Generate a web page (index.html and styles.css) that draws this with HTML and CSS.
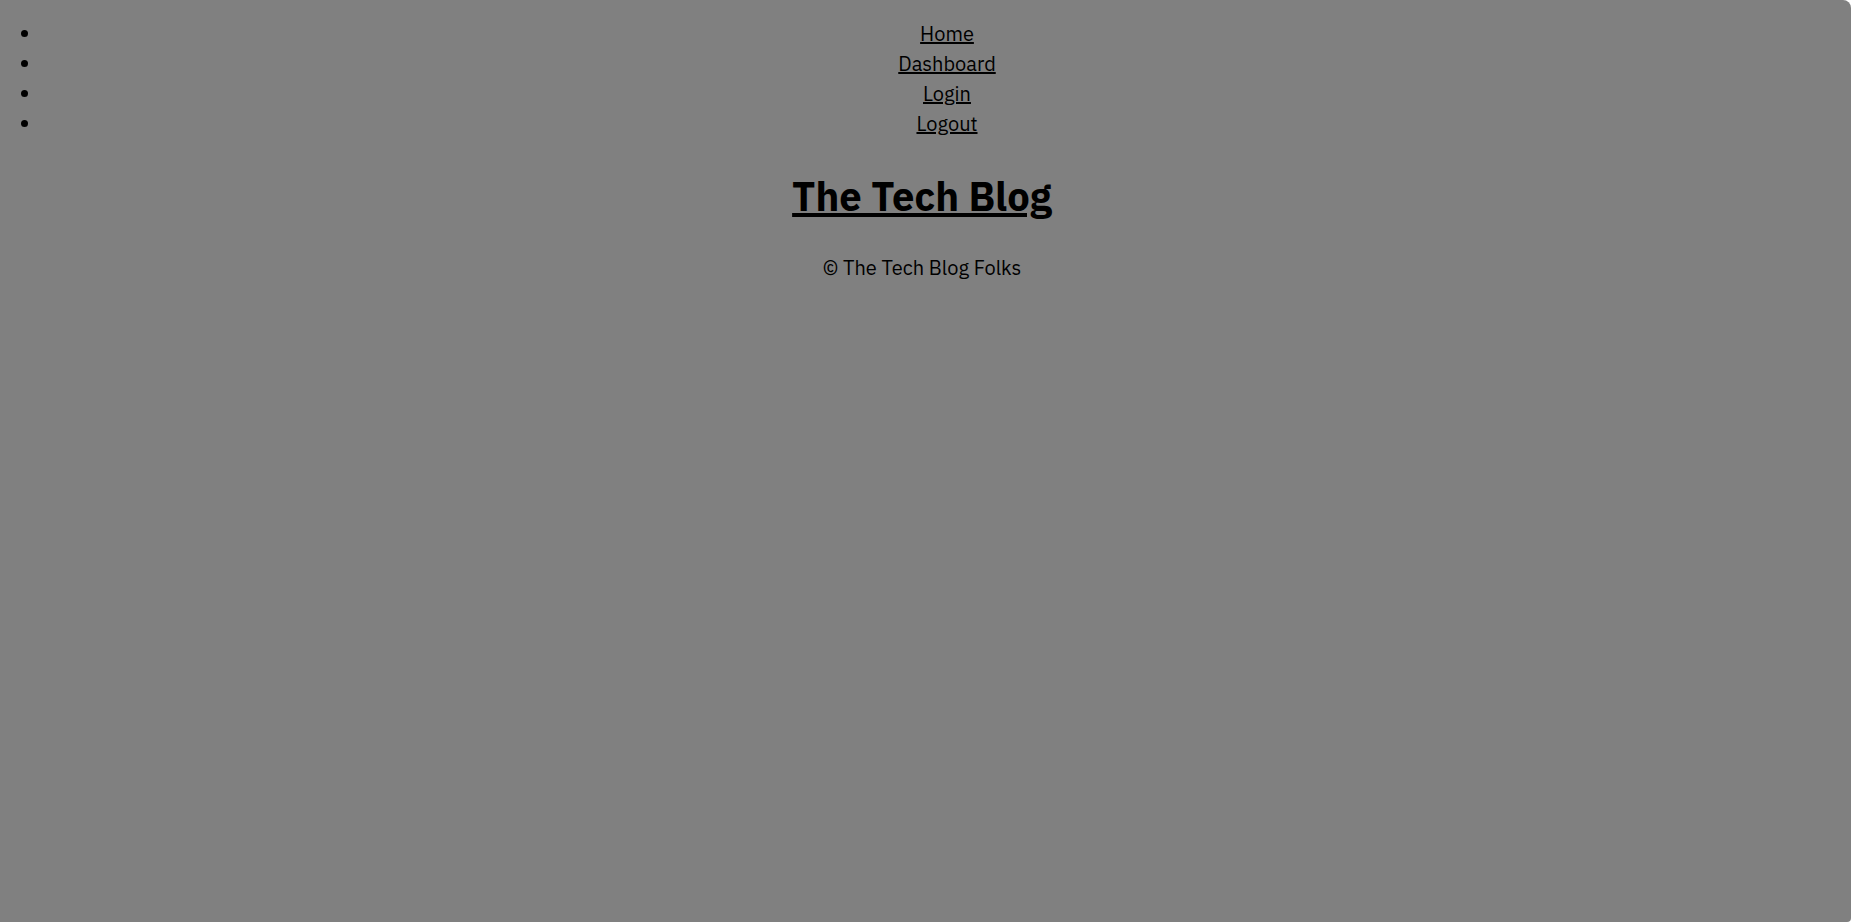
FILE: index.html
```html
<!DOCTYPE html>
<html lang="en">
<head>
<meta charset="utf-8">
<title>The Tech Blog</title>
<link rel="stylesheet" href="styles.css">
</head>
<body>
<div class="page">
<nav>
<ul class="nav-list">
<li><a href="#home">Home</a></li>
<li><a href="#dashboard">Dashboard</a></li>
<li><a href="#login">Login</a></li>
<li><a href="#logout">Logout</a></li>
</ul>
</nav>
<header><h1 class="title"><a href="#home">The Tech Blog</a></h1></header>
<footer class="footer">© The Tech Blog Folks</footer>
</div>
</body>
</html>
```
FILE: styles.css
```css
body {
  margin: 0;
  background: #fff;
  color: #000;
  font-family: "IBM Plex Sans", "Open Sans", sans-serif;
  font-size: 20px;
  font-weight: 400;
  line-height: 30px;
}

.page {
  box-sizing: border-box;
  min-height: 100vh;
  margin-right: 1px;
  padding: 19px 7px 19px 0;
  background: #808080;
  border-radius: 0 8px 4px 0;
  text-align: center;
}

.nav-list {
  margin: 0;
  padding-left: 42px;
}

.nav-list li {
  padding-left: 8px;
}

a {
  color: inherit;
}

.title {
  margin: 27px 0;
  font-size: 40px;
  font-weight: 700;
  line-height: 60px;
}
```
